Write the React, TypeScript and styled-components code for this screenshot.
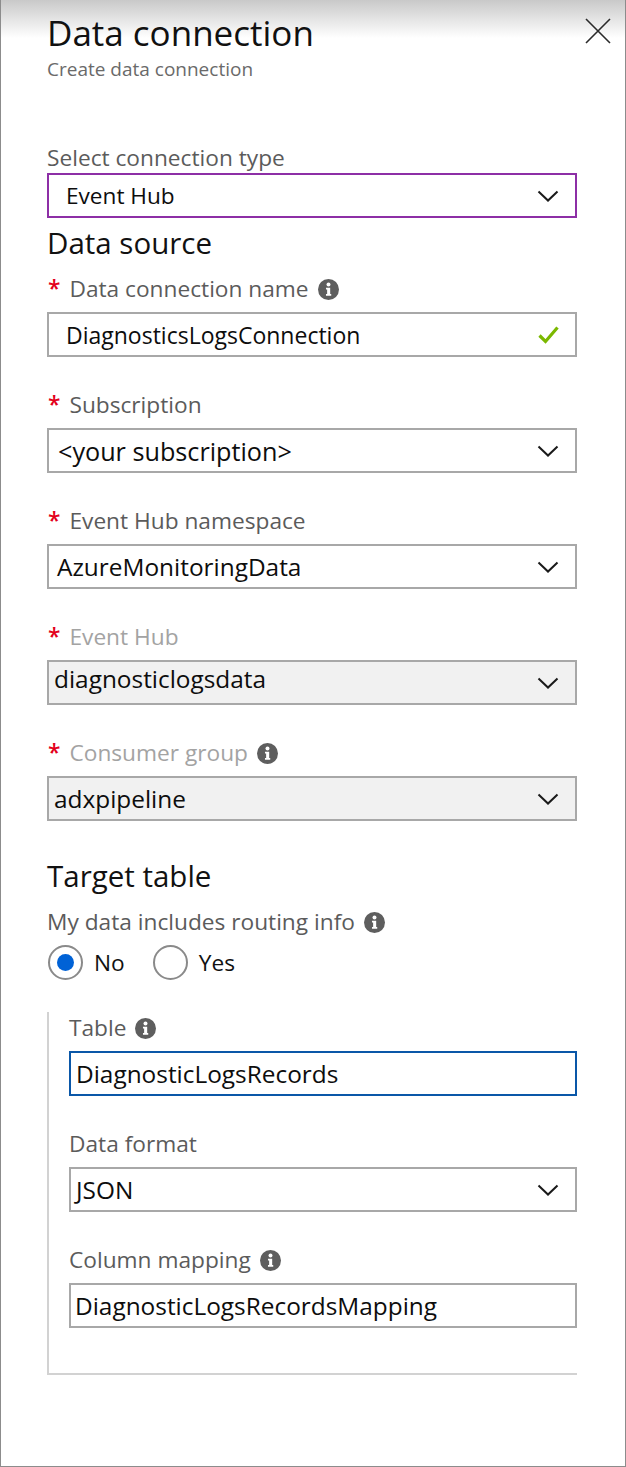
import React from "react";
import styled, { createGlobalStyle } from "styled-components";

const GlobalStyle = createGlobalStyle`
  html, body { margin: 0; padding: 0; background: #ffffff; }
  body { font-family: "Open Sans", "Noto Sans", sans-serif; }
  * { box-sizing: border-box; }
`;

const Panel = styled.div`
  width: 626px;
  min-height: 1467px;
  border-left: 1px solid #8c8c8c;
  border-right: 1px solid #8c8c8c;
  border-bottom: 1px solid #8c8c8c;
  background: linear-gradient(to bottom, #c9c9c9 0px, #ffffff 38px) no-repeat;
  background-color: #ffffff;
  font-family: "Open Sans", "Noto Sans", sans-serif;
`;

const Header = styled.header`
  display: flex;
  justify-content: space-between;
  align-items: flex-start;
  padding: 13px 14px 0 46px;
`;

const TitleBlock = styled.div`
  display: flex;
  flex-direction: column;
  gap: 5px;
`;

const Title = styled.h1`
  margin: 0;
  font-size: 35px;
  line-height: 40px;
  font-weight: 400;
  color: #111111;
`;

const Subtitle = styled.div`
  font-size: 19px;
  line-height: 22px;
  color: #6a6a6a;
`;

const CloseButton = styled.button`
  margin-top: 5px;
  padding: 0;
  width: 26px;
  height: 26px;
  border: none;
  background: transparent;
  display: flex;
  cursor: pointer;
`;

const Body = styled.div`
  display: flex;
  flex-direction: column;
  padding: 65px 48px 0 46px;
`;

const Field = styled.div<{ $gap?: number; $mt?: number }>`
  display: flex;
  flex-direction: column;
  gap: ${(p) => p.$gap ?? 10}px;
  margin-top: ${(p) => p.$mt ?? 0}px;
`;

const LabelRow = styled.div<{ $disabled?: boolean }>`
  display: flex;
  align-items: center;
  height: 26px;
  font-size: 22.7px;
  line-height: 26px;
  color: ${(p) => (p.$disabled ? "#a3a3a3" : "#5b5b5b")};
  white-space: nowrap;
`;

const Required = styled.span`
  color: #e3001b;
  font-weight: 600;
  margin-right: 9px;
  margin-left: 1px;
`;

const InfoWrap = styled.span`
  display: inline-flex;
  margin-left: 9px;
`;

const SectionHeading = styled.h2<{ $mt: number }>`
  margin: ${(p) => p.$mt}px 0 0;
  font-size: 29.5px;
  line-height: 34px;
  font-weight: 400;
  color: #111111;
`;

const Box = styled.div<{
  $variant?: "plain" | "purple" | "blue";
  $disabled?: boolean;
  $pl: number;
  $fs: number;
  $raise?: boolean;
}>`
  height: 45px;
  display: flex;
  align-items: center;
  justify-content: space-between;
  padding: ${(p) => (p.$raise ? "0 16px 8px" : "0 16px 0")};
  padding-left: ${(p) => p.$pl}px;
  border: 2px solid
    ${(p) =>
      p.$variant === "purple"
        ? "#8d2fa6"
        : p.$variant === "blue"
        ? "#0a57a8"
        : "#a8a8a8"};
  background: ${(p) => (p.$disabled ? "#f1f1f1" : "#ffffff")};
  font-size: ${(p) => p.$fs}px;
  color: #0d0d0d;
  white-space: nowrap;
`;

const BoxIcon = styled.span<{ $raise?: boolean }>`
  display: flex;
  margin-bottom: ${(p) => (p.$raise ? -8 : 0)}px;
`;

const RadioRow = styled.div`
  display: flex;
  align-items: center;
  gap: 27px;
  margin-top: 10px;
  height: 35px;
`;

const RadioOption = styled.label`
  display: flex;
  align-items: center;
  gap: 11px;
  font-size: 22.7px;
  color: #111111;
  margin-left: 1px;
`;

const RadioCircle = styled.span<{ $checked?: boolean }>`
  width: 35px;
  height: 35px;
  border-radius: 50%;
  border: 2px solid #8a8a8a;
  display: flex;
  align-items: center;
  justify-content: center;
  &::after {
    content: "";
    width: 17px;
    height: 17px;
    border-radius: 50%;
    background: ${(p) => (p.$checked ? "#0062d6" : "transparent")};
  }
`;

const TableSection = styled.div`
  margin-top: 32px;
  display: flex;
  flex-direction: column;
  padding: 3px 0 45px 20px;
  border-left: 2px solid #d2d2d2;
  border-bottom: 2px solid #d2d2d2;
`;

const Chevron = () => (
  <svg width="22" height="12" viewBox="0 0 22 12" fill="none">
    <path d="M1.5 1.5 L11 10.5 L20.5 1.5" stroke="#1a1a1a" strokeWidth="2" />
  </svg>
);

const Check = () => (
  <svg width="21" height="18" viewBox="0 0 21 18" fill="none">
    <path d="M1.5 9.5 L7.5 15.5 L19.5 1.5" stroke="#7bb800" strokeWidth="3.2" />
  </svg>
);

const CloseIcon = () => (
  <svg width="26" height="26" viewBox="0 0 26 26" fill="none">
    <path d="M1 1 L25 25 M25 1 L1 25" stroke="#2a2a2a" strokeWidth="1.6" />
  </svg>
);

const InfoIcon = () => (
  <InfoWrap>
    <svg width="21" height="21" viewBox="0 0 20 20">
      <circle cx="10" cy="10" r="10" fill="#5e5e5e" />
      <circle cx="10" cy="5.3" r="1.9" fill="#ffffff" />
      <path d="M7.6 8.4 H11.6 V14.3 H12.6 V16 H7.6 V14.3 H8.7 V10.1 H7.6 Z" fill="#ffffff" />
    </svg>
  </InfoWrap>
);

type FieldProps = {
  label: string;
  value: string;
  required?: boolean;
  info?: boolean;
  disabled?: boolean;
  variant?: "plain" | "purple" | "blue";
  kind: "select" | "input" | "valid";
  pl: number;
  fs?: number;
  gap?: number;
  mt?: number;
  raise?: boolean;
};

const FormField = ({
  label,
  value,
  required,
  info,
  disabled,
  variant = "plain",
  kind,
  pl,
  fs = 24.4,
  gap,
  mt,
  raise,
}: FieldProps) => (
  <Field $gap={gap} $mt={mt}>
    <LabelRow $disabled={disabled}>
      {required && <Required>*</Required>}
      {label}
      {info && <InfoIcon />}
    </LabelRow>
    <Box $variant={variant} $disabled={disabled} $pl={pl} $fs={fs} $raise={raise}>
      <span>{value}</span>
      {kind === "select" && (
        <BoxIcon $raise={raise}>
          <Chevron />
        </BoxIcon>
      )}
      {kind === "valid" && (
        <BoxIcon>
          <Check />
        </BoxIcon>
      )}
    </Box>
  </Field>
);

export default function App() {
  return (
    <>
      <GlobalStyle />
      <Panel>
        <Header>
          <TitleBlock>
            <Title>Data connection</Title>
            <Subtitle>Create data connection</Subtitle>
          </TitleBlock>
          <CloseButton aria-label="Close">
            <CloseIcon />
          </CloseButton>
        </Header>
        <Body>
          <FormField
            label="Select connection type"
            value="Event Hub"
            kind="select"
            variant="purple"
            pl={17}
            fs={22.6}
            gap={2}
          />
          <SectionHeading $mt={8}>Data source</SectionHeading>
          <FormField
            label="Data connection name"
            value="DiagnosticsLogsConnection"
            required
            info
            kind="valid"
            pl={17}
            fs={23}
            mt={16}
          />
          <FormField
            label="Subscription"
            value="<your subscription>"
            required
            kind="select"
            pl={9}
            fs={25.2}
            mt={35}
          />
          <FormField
            label="Event Hub namespace"
            value="AzureMonitoringData"
            required
            kind="select"
            pl={8}
            mt={35}
          />
          <FormField
            label="Event Hub"
            value="diagnosticlogsdata"
            required
            disabled
            kind="select"
            pl={5}
            mt={35}
            raise
          />
          <FormField
            label="Consumer group"
            value="adxpipeline"
            required
            info
            disabled
            kind="select"
            pl={5}
            mt={35}
          />
          <SectionHeading $mt={38}>Target table</SectionHeading>
          <Field $mt={16}>
            <LabelRow>
              My data includes routing info
              <InfoIcon />
            </LabelRow>
          </Field>
          <RadioRow>
            <RadioOption>
              <RadioCircle $checked />
              No
            </RadioOption>
            <RadioOption>
              <RadioCircle />
              Yes
            </RadioOption>
          </RadioRow>
          <TableSection>
            <FormField
              label="Table"
              value="DiagnosticLogsRecords"
              info
              kind="input"
              variant="blue"
              pl={5}
            />
            <FormField
              label="Data format"
              value="JSON"
              kind="select"
              pl={5}
              mt={35}
            />
            <FormField
              label="Column mapping"
              value="DiagnosticLogsRecordsMapping"
              info
              kind="input"
              pl={4}
              mt={35}
            />
          </TableSection>
        </Body>
      </Panel>
    </>
  );
}
